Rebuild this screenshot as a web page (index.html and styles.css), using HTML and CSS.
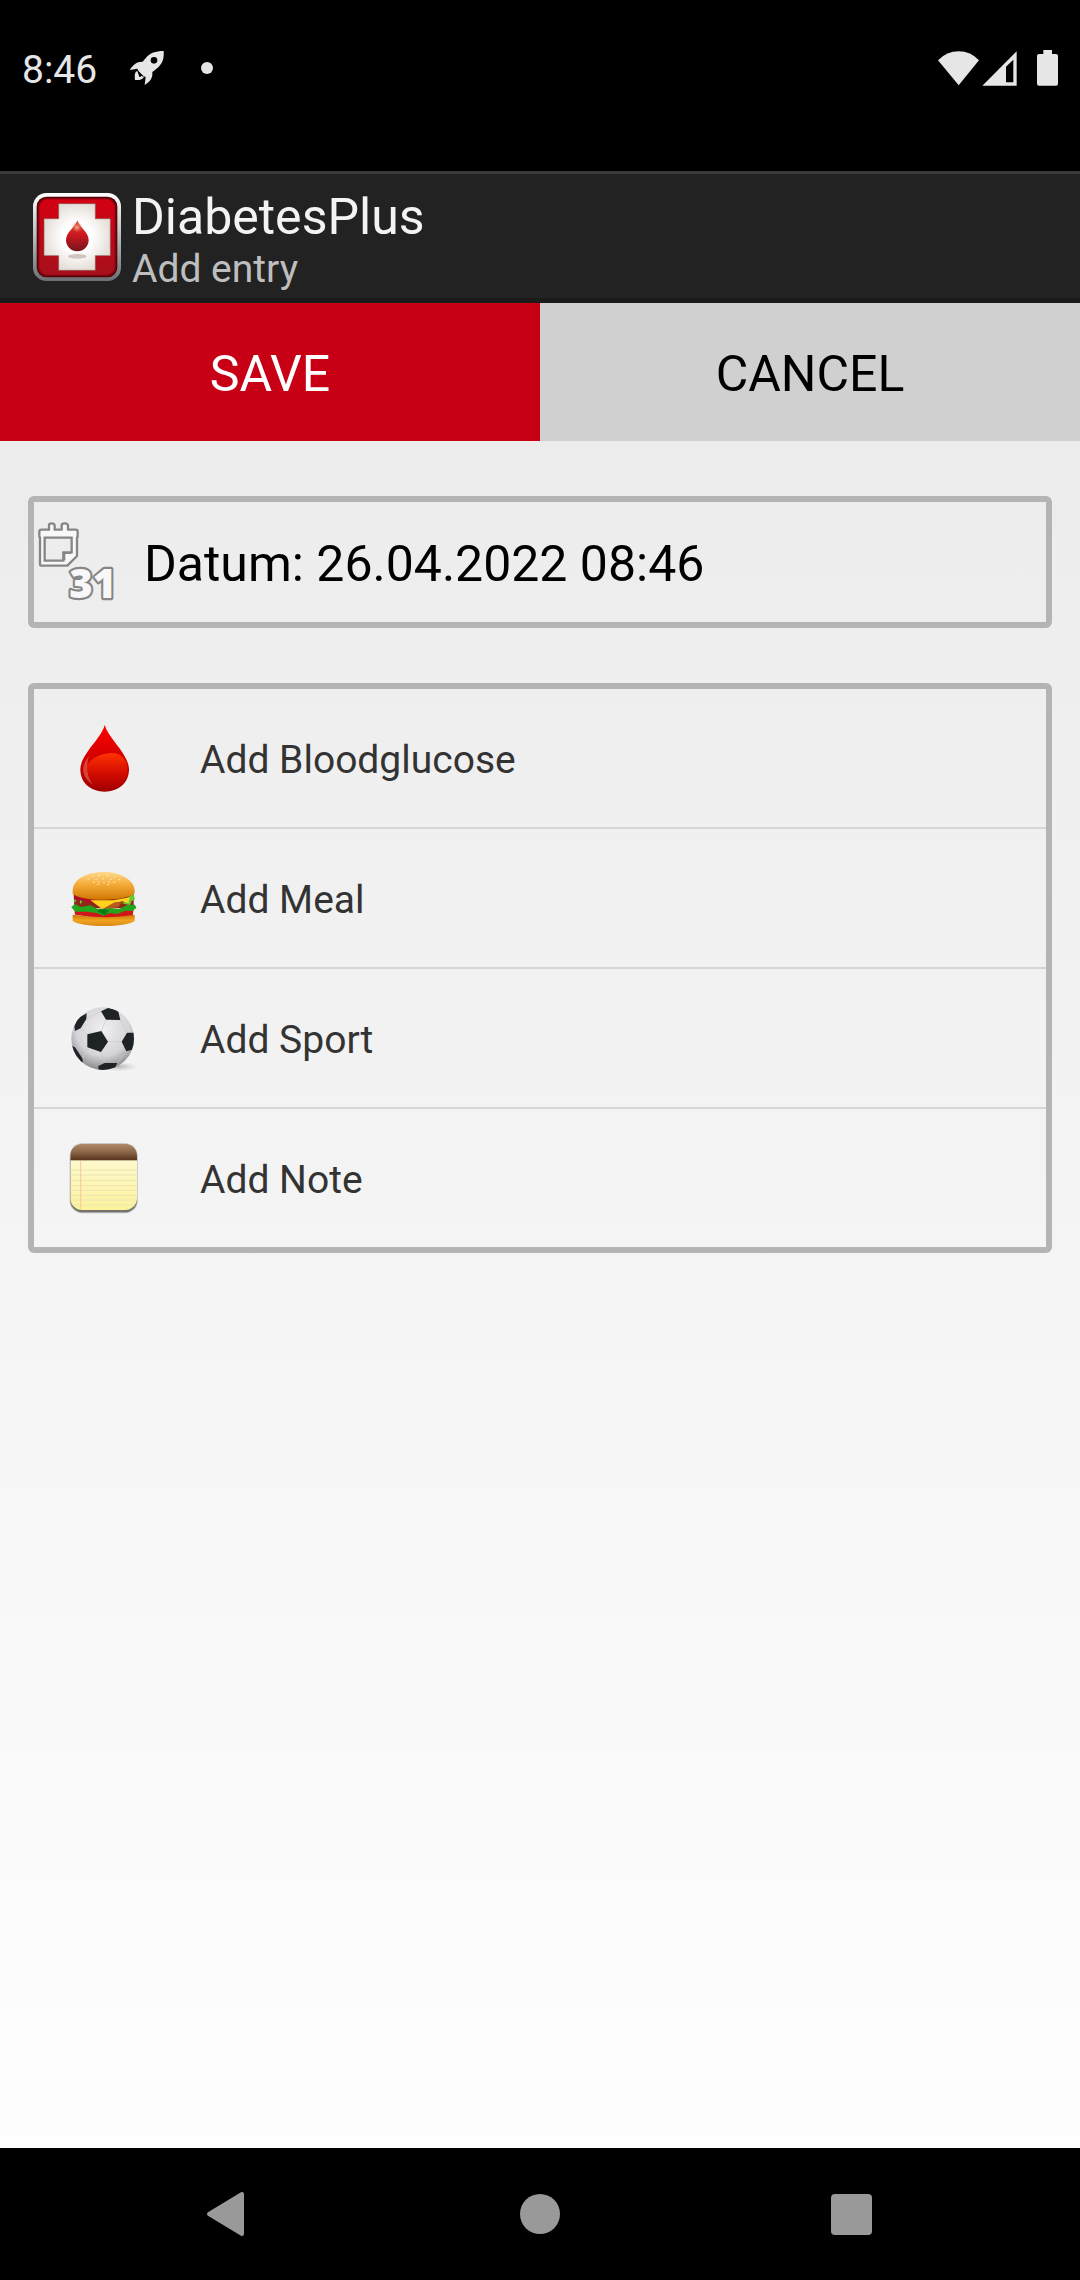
FILE: index.html
```html
<!DOCTYPE html>
<html lang="en">
<head>
<meta charset="utf-8">
<meta name="viewport" content="width=device-width, initial-scale=1">
<title>DiabetesPlus - Add entry</title>
<link rel="stylesheet" href="styles.css">
</head>
<body>
<div class="status">
  <time class="clock">8:46</time>
  <svg class="rocket" viewBox="387 57 108 108" aria-hidden="true">
    <path fill="#e6e6e6" fill-rule="evenodd" d="M491 60C466 60 450 66 438 80Q432 87 428 92C411 91 399 101 389 117L412 113L416 121L431 136L437 138L434 162C449 153 459 141 457 123C465 117 474 111 480 103C490 91 492 78 491 60ZM462 78a10 10 0 1 1 0 20a10 10 0 0 1 0-20Z"/>
    <path fill="#e6e6e6" d="M412 120C403 124 404 134 405 147C416 147 427 147 432 137L424 135Q418 142 417 134Z"/>
  </svg>
  <span class="dot"></span>
  <span class="signals">
    <svg class="wifi" viewBox="84 57 123 108" aria-hidden="true"><path fill="#e6e6e6" d="M84 88Q110 61 146 61T207 88L146 163Z"/></svg>
    <svg class="cell" viewBox="216 57 105 108" aria-hidden="true"><path fill="#e6e6e6" fill-rule="evenodd" d="M217 164L320 61V164ZM288 107V154H310V86Z"/></svg>
    <svg class="battery" viewBox="381 57 63 108" aria-hidden="true"><path fill="#e6e6e6" d="M400 57h26v12h12q6 0 6 6v83q0 6-6 6h-51q-6 0-6-6V75q0-6 6-6h13z"/></svg>
  </span>
</div>

<header class="appbar">
  <svg class="logo" viewBox="99 99 264 264" aria-hidden="true">
    <defs>
      <linearGradient id="rim" x1="0" y1="0" x2="0" y2="1"><stop offset="0" stop-color="#fff"/><stop offset=".5" stop-color="#b9babb"/><stop offset="1" stop-color="#6c7074"/></linearGradient>
      <linearGradient id="plate" x1="0" y1="0" x2="0" y2="1"><stop offset="0" stop-color="#d30012"/><stop offset="1" stop-color="#a8101c"/></linearGradient>
      <radialGradient id="cross"><stop offset=".45" stop-color="#fff"/><stop offset="1" stop-color="#e6e0da"/></radialGradient>
      <linearGradient id="smalldrop" x1="0" y1="0" x2="0" y2="1"><stop offset="0" stop-color="#d6453a"/><stop offset=".45" stop-color="#cf1820"/><stop offset="1" stop-color="#74151a"/></linearGradient>
      <radialGradient id="shine"><stop offset="0" stop-color="#f6b48e"/><stop offset="1" stop-color="#e0503c" stop-opacity="0"/></radialGradient>
    </defs>
    <rect x="99" y="99" width="264" height="264" rx="40" fill="url(#rim)"/>
    <rect x="110" y="110" width="242" height="242" rx="30" fill="#4c0308"/>
    <rect x="113" y="113" width="236" height="236" rx="28" fill="#7e0510"/>
    <rect x="118" y="118" width="226" height="226" rx="24" fill="url(#plate)"/>
    <path d="M176 131H286V176H331V287H286V331H176V287H132V176H176Z" fill="url(#cross)" stroke="#8d5a55" stroke-width="2"/>
    <ellipse cx="232" cy="289" rx="28" ry="7" fill="#cfc5be"/>
    <path d="M232 181C226 203 198 215 198 241A34 33 0 0 0 266 241C266 215 238 203 232 181Z" fill="url(#smalldrop)"/>
    <ellipse cx="231" cy="202" rx="17" ry="17" fill="url(#shine)"/>
  </svg>
  <div>
    <h1 class="title">DiabetesPlus</h1>
    <p class="subtitle">Add entry</p>
  </div>
</header>

<div class="actions">
  <button class="action save" type="button">SAVE</button>
  <button class="action cancel" type="button">CANCEL</button>
</div>

<main class="content">
  <button class="date" type="button">
    <svg class="icon" viewBox="102 114 264 264" aria-hidden="true">
      <path d="M124 149H147V136Q147 130 155 130T164 136V149H185V136Q185 130 194 130T204 136V149H227Q233 149 233 155V170L231 172V228L202 257H126Q120 257 120 251V172L118 170V155Q118 149 124 149Z" fill="#f8f8f8" stroke="#868686" stroke-width="7" stroke-linejoin="round"/>
      <path d="M134 173H215V217H190V242H134Z" fill="#ededed" stroke="#868686" stroke-width="7"/>
      <path d="M194 241V220H214" fill="none" stroke="#868686" stroke-width="4"/>
      <text class="day" x="208" y="353">31</text>
    </svg>
    <span>Datum: 26.04.2022 08:46</span>
  </button>

  <ul class="entries">
    <li><button class="entry" type="button">
      <svg class="icon" viewBox="120 132 264 264" aria-hidden="true">
        <defs>
          <linearGradient id="blood" x1="0" y1="0" x2="0" y2="1"><stop offset="0" stop-color="#ff0000"/><stop offset=".5" stop-color="#d20000"/><stop offset="1" stop-color="#a00000"/></linearGradient>
          <linearGradient id="gloss" x1="0" y1="0" x2="0" y2="1"><stop offset="0" stop-color="#ff3300"/><stop offset=".55" stop-color="#d30c00"/><stop offset="1" stop-color="#a40000"/></linearGradient>
        </defs>
        <path d="M254 165C245 205 181 253 181 298C181 340 214 365 254 365S327 340 327 298C327 253 265 205 254 165Z" fill="url(#blood)"/>
        <path d="M201 287C212 262 250 249 276 249C305 249 323 272 323 298C323 336 293 358 254 359C220 357 201 325 201 287Z" fill="url(#gloss)"/>
        <path d="M207 258C182 286 182 322 220 345C199 320 198 286 207 258Z" fill="#f06a5a" opacity=".6"/>
      </svg>
      <span>Add Bloodglucose</span></button></li>
    <li><button class="entry" type="button">
      <svg class="icon" viewBox="120 42 264 264" aria-hidden="true">
        <defs>
          <linearGradient id="bun" x1="0" y1="0" x2="0" y2="1"><stop offset="0" stop-color="#ffd98c"/><stop offset=".45" stop-color="#f4ab38"/><stop offset="1" stop-color="#cf7800"/></linearGradient>
          <linearGradient id="base" x1="0" y1="0" x2="0" y2="1"><stop offset="0" stop-color="#c97700"/><stop offset=".5" stop-color="#f0a320"/><stop offset="1" stop-color="#d98a18"/></linearGradient>
        </defs>
        <path d="M158 224Q250 238 344 224V243Q320 258 251 258T158 243Z" fill="url(#base)"/>
        <path d="M163 208H341L338 226Q250 238 165 224Z" fill="#cf1717"/>
        <path d="M161 161H341V205H163Z" fill="#8f271b"/>
        <path d="M163 163L205 171L230 180L218 190L163 178Z" fill="#b00d25"/>
        <path d="M154 202L164 192L183 201L211 196L234 208L268 203L296 208L322 195L345 194L349 204L337 213L315 212L292 222L270 219L250 227L230 219L198 215L166 215Z" fill="#23a51c"/>
        <path d="M160 178l9 2-4 8zM180 180l8 5-8 7zM305 190l16-8 14 4-6 9zM318 176l22-15 5 17-14 8z" fill="#65c92c"/>
        <path d="M231 213l20-9 16 9-13 13z" fill="#087e16"/>
        <path d="M211 181L280 181L329 172L326 190L306 184L282 190L248 208Z" fill="#ffd21c"/>
        <path d="M248 207L284 187L306 187L294 202Z" fill="#b65b1c"/>
        <path d="M158 153C158 115 204 96 251 96S344 119 344 153V160Q320 179 251 179T158 161Z" fill="url(#bun)"/>
        <path d="M204 117h3m10-8h3m7 10h3m5-12h3m10 9h3m9-10h3m8 12h3m9-8h3m10 9h3M220 127h3m12-1h3m12 2h3m13-2h3m13 1h3M232 133h3m28 0h3" stroke="#ffe9b4" stroke-width="3" stroke-linecap="round"/>
      </svg>
      <span>Add Meal</span></button></li>
    <li><button class="entry" type="button">
      <svg class="icon" viewBox="30 42 264 264" aria-hidden="true">
        <defs>
          <radialGradient id="ball" cx=".5" cy=".35" r=".65"><stop offset="0" stop-color="#f0f0f2"/><stop offset=".65" stop-color="#d5d5d9"/><stop offset="1" stop-color="#8c8c90"/></radialGradient>
          <radialGradient id="shade"><stop offset="0" stop-color="#999" stop-opacity=".7"/><stop offset="1" stop-color="#bbb" stop-opacity="0"/></radialGradient>
          <clipPath id="round"><circle cx="158" cy="176" r="94"/></clipPath>
        </defs>
        <ellipse cx="205" cy="260" rx="60" ry="14" fill="url(#shade)"/>
        <circle cx="158" cy="176" r="94" fill="url(#ball)"/>
        <g clip-path="url(#round)">
          <path d="M112 163L154 153L174 185L153 216L112 202ZM153 94L174 84L204 91L211 120L168 119ZM73 139L82 116L110 100L109 117L92 145L75 153ZM215 185L231 158L252 158V208L229 214ZM64 197L75 202L98 236V250L76 236ZM145 258L164 249L202 249L192 270H145Z" fill="#202326"/>
          <path d="M174 185L215 185M154 153L168 119M112 163L92 145M112 202L98 236M153 216L164 249M211 120L231 158M202 249L229 214M109 117L153 94" stroke="#c8c8cc" stroke-width="2"/>
        </g>
      </svg>
      <span>Add Sport</span></button></li>
    <li><button class="entry" type="button">
      <svg class="icon" viewBox="120 72 264 264" aria-hidden="true">
        <defs>
          <linearGradient id="paper" x1="0" y1="0" x2="0" y2="1"><stop offset="0" stop-color="#fffbe0"/><stop offset="1" stop-color="#fcf39a"/></linearGradient>
          <linearGradient id="leather" x1="0" y1="0" x2="0" y2="1"><stop offset="0" stop-color="#b08c6c"/><stop offset=".5" stop-color="#8c6647"/><stop offset="1" stop-color="#55331c"/></linearGradient>
          <clipPath id="pad"><rect x="151" y="101" width="200" height="199" rx="36"/></clipPath>
        </defs>
        <rect x="149" y="100" width="204" height="210" rx="38" fill="#bbb"/>
        <rect x="151" y="103" width="200" height="204" rx="37" fill="#74746c"/>
        <g clip-path="url(#pad)">
          <rect x="151" y="101" width="200" height="200" fill="url(#paper)"/>
          <path d="M151 180H351M151 195H351M151 211H351M151 227H351M151 241H351M151 256H351M151 270H351M151 285H351" stroke="#ebe4b4" stroke-width="3"/>
          <path d="M182 152V300" stroke="#ffc59a" stroke-width="3"/>
          <rect x="151" y="101" width="200" height="50" fill="url(#leather)"/>
        </g>
      </svg>
      <span>Add Note</span></button></li>
  </ul>
</main>

<nav class="navbar">
  <button class="nav" type="button" aria-label="Back"><svg viewBox="0 0 48 48"><path d="M38 4V44L5 24Z" fill="#999" stroke="#999" stroke-width="4" stroke-linejoin="round"/></svg></button>
  <button class="nav" type="button" aria-label="Home"><svg viewBox="0 0 48 48"><circle cx="24" cy="24" r="20" fill="#999"/></svg></button>
  <button class="nav" type="button" aria-label="Recent apps"><svg viewBox="0 0 48 48"><rect x="3" y="4" width="41" height="41" rx="4" fill="#999"/></svg></button>
</nav>
</body>
</html>
```
FILE: styles.css
```css
* {
  box-sizing: border-box;
}

body {
  margin: 0;
  min-height: 100vh;
  display: flex;
  flex-direction: column;
  background: #000;
  color: #000;
  font-family: Roboto, sans-serif;
  font-size: 50px;
}

button {
  margin: 0;
  padding: 0;
  border: 0;
  border-radius: 0;
  background: none;
  color: inherit;
  font: inherit;
}

svg {
  display: block;
  flex: none;
}

.status {
  display: flex;
  align-items: center;
  height: 171px;
  padding: 0 22px 36px;
  color: #e6e6e6;
  font-size: 39px;
}

.clock {
  padding-top: 4px;
}

.rocket {
  width: 36px;
  height: 36px;
  margin-left: 32px;
}

.dot {
  width: 12px;
  height: 12px;
  margin-left: 36px;
  border-radius: 50%;
  background: #e6e6e6;
}

.signals {
  display: flex;
  margin-left: auto;
}

.wifi {
  width: 41px;
  height: 36px;
}

.cell {
  width: 35px;
  height: 36px;
  margin-left: 3px;
}

.battery {
  width: 21px;
  height: 36px;
  margin-left: 20px;
}

.appbar {
  display: flex;
  align-items: flex-start;
  gap: 11px;
  padding: 14px 33px 6px;
  border-top: 3px solid #3a3a3a;
  border-bottom: 5px solid #1b1b1b;
  background: #222;
}

.logo {
  width: 88px;
  height: 88px;
  margin-top: 5px;
}

.title {
  margin: 0;
  color: #f3f3f3;
  font-size: 50px;
  font-weight: 400;
  line-height: 58px;
}

.subtitle {
  margin: 0;
  color: #bebebe;
  font-size: 39px;
  line-height: 46px;
}

.actions {
  display: grid;
  grid-template-columns: 1fr 1fr;
}

.action {
  height: 138px;
  padding-top: 3px;
}

.save {
  background: #c70015;
  color: #fff;
}

.cancel {
  background: #d0d0d0;
}

.content {
  flex: 1;
  display: flex;
  flex-direction: column;
  gap: 55px;
  padding: 55px 28px;
  background: linear-gradient(#ececec, #fefefe);
}

.date,
.entries {
  border: 6px solid #b4b4b4;
  border-radius: 6px;
}

.date {
  display: flex;
  align-items: center;
  gap: 22px;
  height: 132px;
  text-align: left;
}

.date span,
.entry span {
  padding-top: 3px;
}

.icon {
  width: 88px;
  height: 88px;
  overflow: visible;
}

.day {
  fill: #f8f8f8;
  stroke: #868686;
  stroke-width: 13px;
  stroke-linejoin: round;
  paint-order: stroke;
  font-family: "Open Sans", sans-serif;
  font-size: 120px;
  font-weight: 800;
}

.entries {
  margin: 0;
  padding: 0;
  list-style: none;
}

.entries li + li {
  border-top: 2px solid #d6d6d6;
}

.entry {
  display: flex;
  align-items: center;
  gap: 52px;
  width: 100%;
  height: 138px;
  padding-left: 26px;
  color: #333;
  font-size: 39px;
  text-align: left;
}

.navbar {
  display: grid;
  grid-template-columns: repeat(3, 1fr);
  place-items: center;
  height: 132px;
  padding: 0 72px;
}

.nav {
  width: 48px;
  height: 48px;
}
```
